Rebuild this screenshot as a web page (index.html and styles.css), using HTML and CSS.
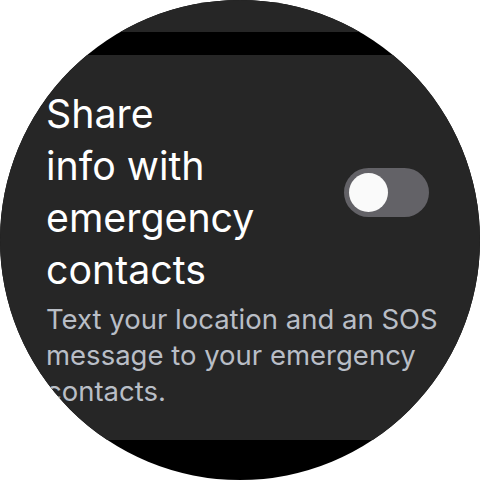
FILE: index.html
```html
<!DOCTYPE html>
<html>
<head>
<meta charset="utf-8">
<link rel="stylesheet" href="styles.css">
</head>
<body>
<div class="watch">
  <div class="card card-prev"></div>
  <div class="card card-main">
    <div class="row">
      <div class="title">Share<br>info with<br>emergency<br>contacts</div>
      <div class="toggle" role="switch" aria-checked="false"><div class="thumb"></div></div>
    </div>
    <div class="desc">Text your location and an SOS message to your emergency contacts.</div>
  </div>
</div>
</body>
</html>
```
FILE: styles.css
```css
html, body {
  margin: 0;
  padding: 0;
  background: #ffffff;
}
.watch {
  width: 480px;
  height: 480px;
  border-radius: 50%;
  overflow: hidden;
  background: #000000;
  display: flex;
  flex-direction: column;
  gap: 23px;
  font-family: Inter, Roboto, "Noto Sans", sans-serif;
}
.card {
  background: #262626;
  flex-shrink: 0;
}
.card-prev {
  height: 32px;
}
.card-main {
  height: 385px;
  box-sizing: border-box;
  padding: 33px 30px 0 46px;
}
.row {
  display: flex;
  align-items: center;
  justify-content: space-between;
  padding-right: 21px;
}
.title {
  color: #ffffff;
  font-size: 39.3px;
  line-height: 52px;
  white-space: nowrap;
}
.toggle {
  width: 85px;
  height: 49px;
  border-radius: 25px;
  background: #636267;
  display: flex;
  align-items: center;
  padding-left: 5px;
  box-sizing: border-box;
}
.thumb {
  width: 39px;
  height: 39px;
  border-radius: 50%;
  background: #fafafa;
}
.desc {
  margin-top: 5px;
  color: #b9bec6;
  font-size: 27.5px;
  line-height: 36px;
}
```
